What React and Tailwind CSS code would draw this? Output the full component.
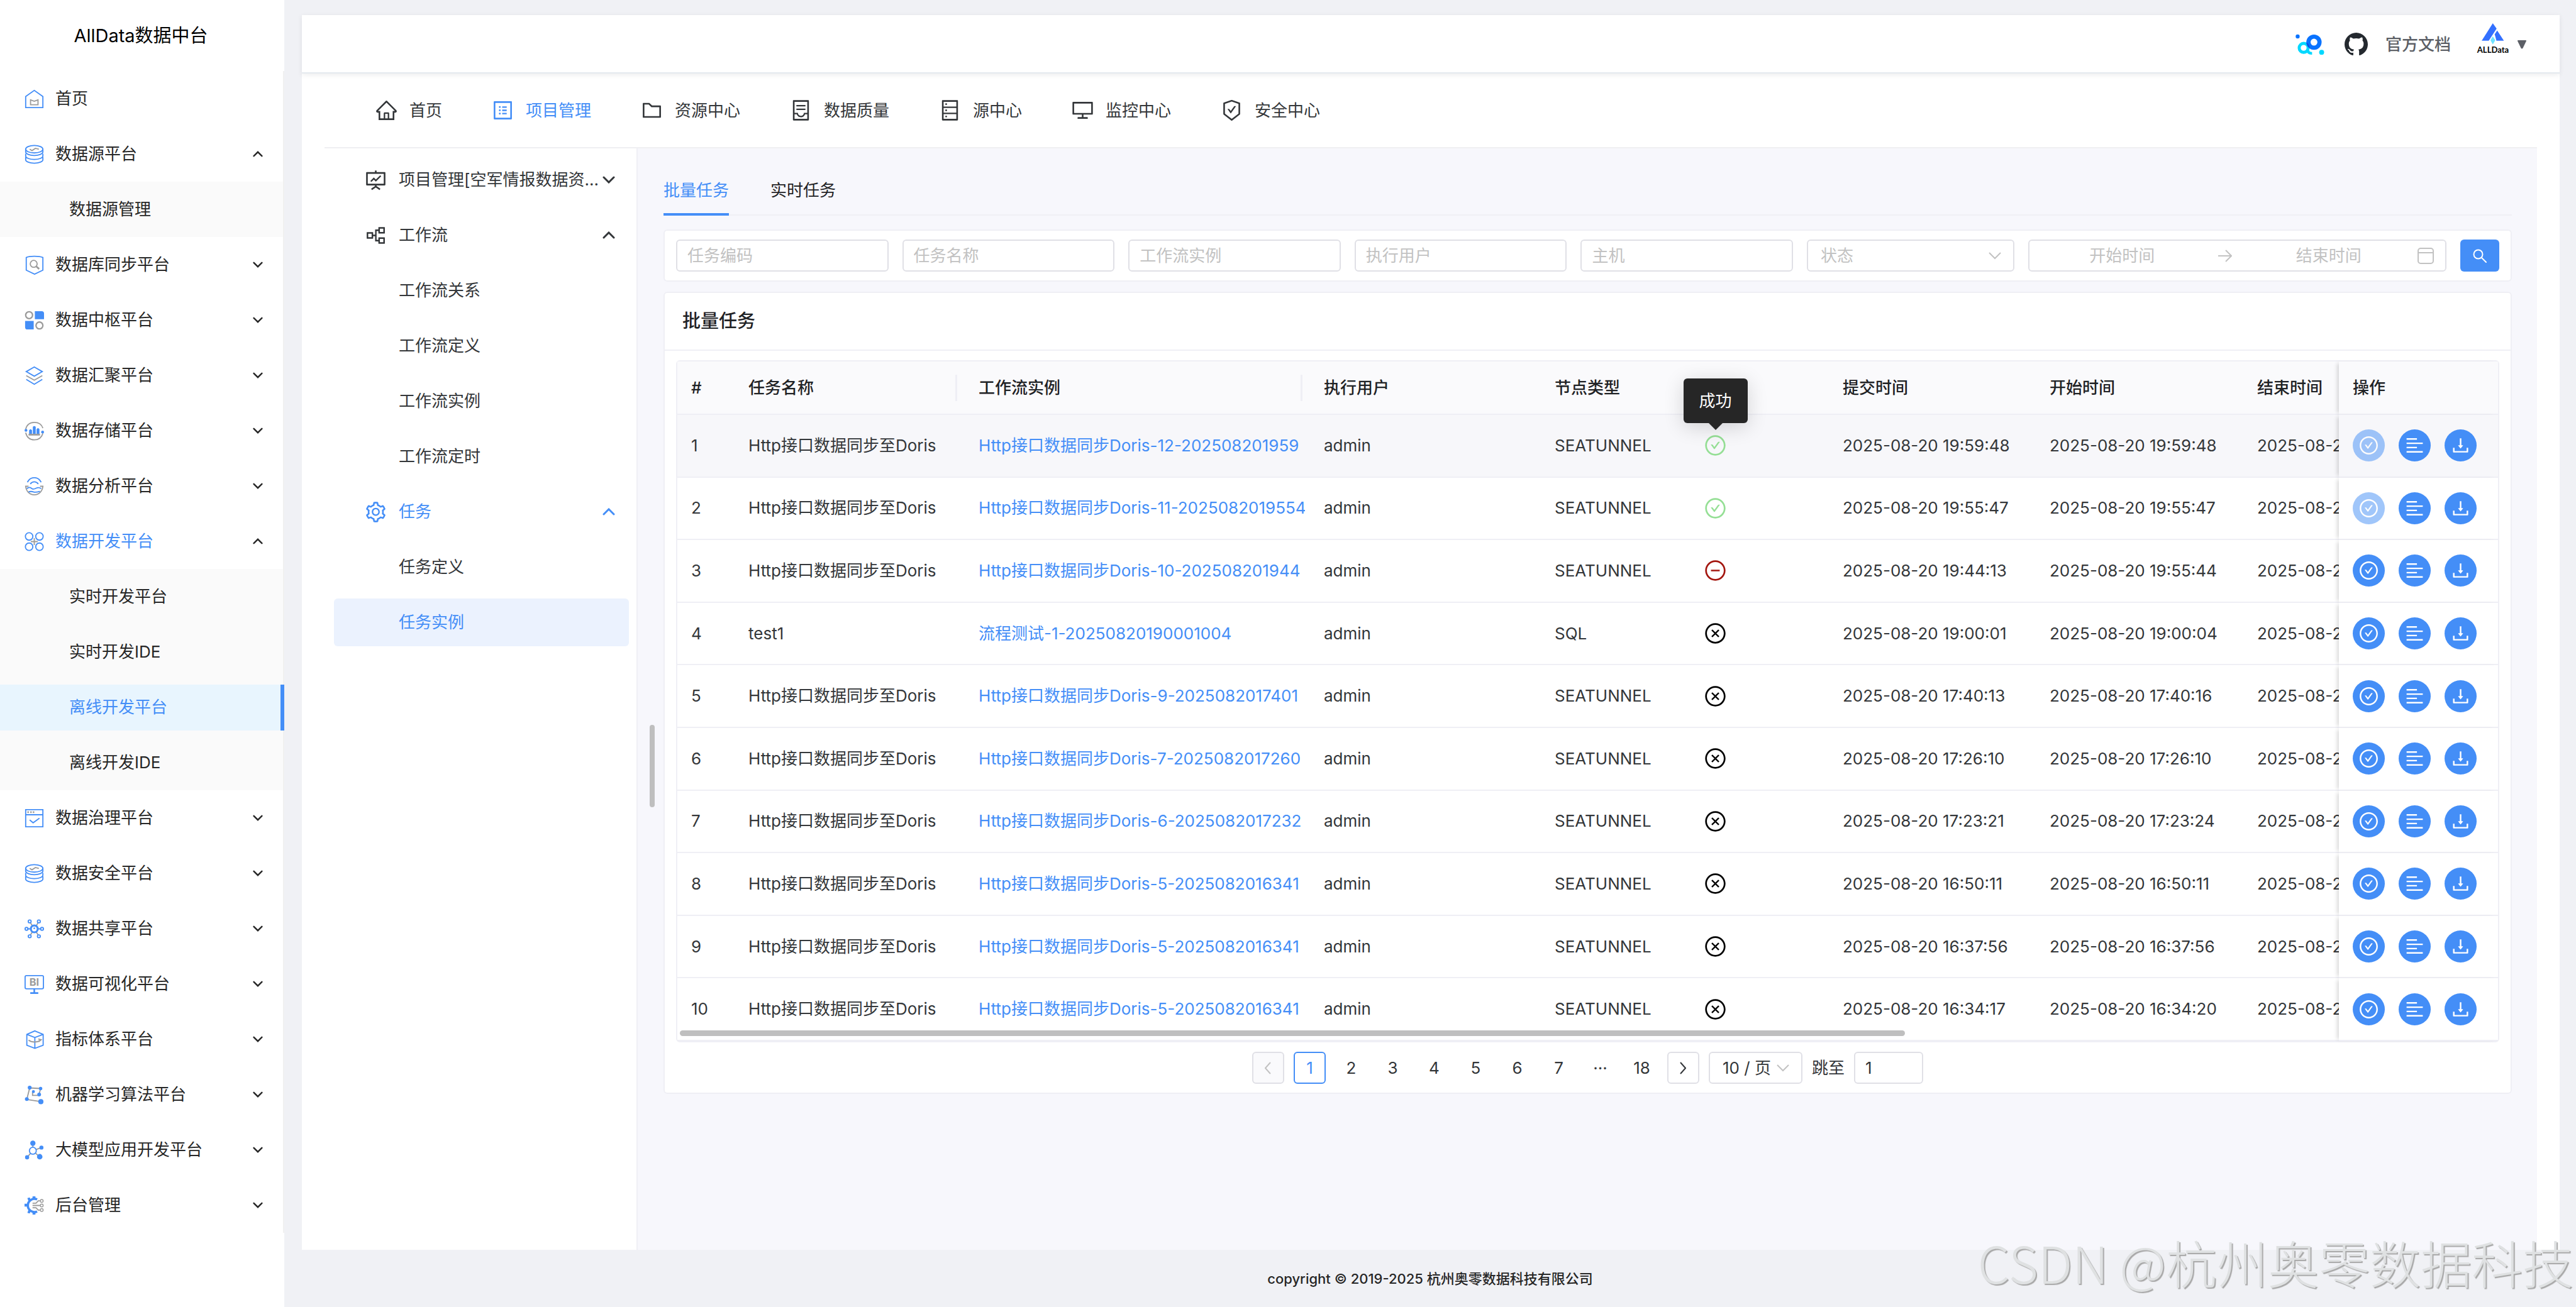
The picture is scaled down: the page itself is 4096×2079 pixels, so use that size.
import { useState } from "react";
import {
  AiOutlineAlignLeft,
  AiOutlineCheckCircle,
  AiOutlineCloseCircle,
  AiOutlineContainer,
  AiOutlineDatabase,
  AiOutlineDesktop,
  AiOutlineDownload,
  AiOutlineFolder,
  AiOutlineFundProjectionScreen,
  AiOutlineHome,
  AiOutlineMinusCircle,
  AiOutlinePartition,
  AiOutlineProfile,
  AiOutlineSafetyCertificate,
  AiOutlineSetting,
} from "react-icons/ai";

const BLUE = "#448ef7";
const GRAY = "#9b9b9b";

// Two-tone icons of the platform menu, all on a 34x34 grid
function MenuIcon({ name }) {
  const shapes = {
    home: (
      <>
        <path d="M2 12.500 17 2l15 10.500V32H2z" stroke={BLUE} />
        <path d="M10.500 18.500 17 21l6.500-2.500V27h-13z" stroke={GRAY} />
      </>
    ),
    db: (
      <>
        <ellipse cx="17" cy="8" rx="15" ry="6.500" stroke={BLUE} />
        <path d="M2 8v5c0 3 6.500 6 15 6s15-3 15-6V8M2 16v4c0 3 6.500 6 15 6s15-3 15-6v-4M2 22v4.500c0 3 6.500 6 15 6s15-3 15-6V22" stroke={BLUE} />
        <path d="m9 8 4 2.500 6-4 6 1.500" stroke={GRAY} />
      </>
    ),
    sync: (
      <>
        <path d="M3 4c5-3 23-3 29 0v22l-14.500 7L3 26z" stroke={BLUE} />
        <circle cx="16" cy="15" r="6" stroke={GRAY} />
        <path d="m20.500 19.500 5 4.500" stroke={GRAY} strokeWidth="3" />
      </>
    ),
    hub: (
      <>
        <circle cx="8" cy="8" r="6" stroke={GRAY} strokeWidth="2.500" />
        <circle cx="26" cy="26" r="6" stroke={GRAY} strokeWidth="2.500" />
        <path d="M18 1h12q4 0 4 4v10H18zM1 18h15v15H5q-4 0-4-4z" fill={BLUE} />
      </>
    ),
    layers: (
      <>
        <path d="m17 2 14 8-14 8-14-8z" stroke={BLUE} />
        <path d="m3 17 14 8 14-8" stroke={GRAY} />
        <path d="m3 23.500 14 8.500 14-8.500" stroke={BLUE} />
      </>
    ),
    store: (
      <>
        <path d="M2 14C4 6 9 2 17 2s13 4 15 10M2 20c2 8 7 12.500 15 12.500S30 28 32 21" stroke={GRAY} />
        <circle cx="2.500" cy="16" r="2.500" fill={BLUE} />
        <circle cx="31.500" cy="19" r="2.500" fill={BLUE} />
        <path d="M8 22v-6q2.500-4 5 0v6zM14.500 22V10q2.500-3 5 0v12zM21 22v-8q2.500-4 5 0v8z" fill={BLUE} />
        <path d="M7 23.500h20" stroke={GRAY} strokeWidth="3" />
      </>
    ),
    analysis: (
      <>
        <path d="M5 10C8 4 12 2 17 2s9 2 12 8M10 13c4-5 10-5 14 0" stroke={BLUE} />
        <path d="M1 17h6M27 17h6M2 17c1 9 7 15 15 15s14-6 15-15" stroke={GRAY} />
        <path d="M4 21c4-3 6-2 9 0s6 0 8-1 5-1 8 1M7 27c4-2 6-1 9 0s7 0 11-1" stroke={BLUE} />
      </>
    ),
    dev: (
      <>
        <circle cx="8" cy="8" r="6.500" stroke={BLUE} />
        <circle cx="26" cy="8" r="6.500" stroke={BLUE} />
        <circle cx="8" cy="26" r="6.500" stroke={BLUE} />
        <circle cx="26" cy="26" r="6.500" stroke={BLUE} />
        <path d="M17 11v12M11 17h12" stroke={GRAY} />
      </>
    ),
    govern: (
      <>
        <path d="M2 2h30v30H2zM2 11h30" stroke={BLUE} />
        <path d="M5 6.500h2.500M10 6.500h2.500M14.500 6.500H17" stroke={GRAY} strokeWidth="3" />
        <path d="m9 20 6 5 11-8" stroke={BLUE} />
      </>
    ),
    share: (
      <>
        <path d="m10 6 4 6M24 6l-4 6M10 28l4-6M24 28l-4-6" stroke={GRAY} />
        <path d="M5 17h6M23 17h6" stroke={BLUE} />
        <circle cx="17" cy="17" r="6" stroke={BLUE} strokeWidth="3.500" />
        <circle cx="17" cy="16" r="1.500" fill={BLUE} />
        <circle cx="9" cy="4" r="2.500" stroke={BLUE} />
        <circle cx="25" cy="4" r="2.500" stroke={BLUE} />
        <circle cx="9" cy="30" r="2.500" stroke={BLUE} />
        <circle cx="25" cy="30" r="2.500" stroke={BLUE} />
        <circle cx="3.500" cy="17" r="2.500" stroke={BLUE} />
        <circle cx="30.500" cy="17" r="2.500" stroke={BLUE} />
      </>
    ),
    bi: (
      <>
        <rect x="1" y="2" width="32" height="23" rx="2.500" stroke={BLUE} />
        <path d="M17 25v7M10 32.500h14" stroke={BLUE} strokeWidth="2.800" />
        <text x="17" y="20" textAnchor="middle" fontSize="18" fontWeight="700" fill={GRAY} stroke="none">BI</text>
      </>
    ),
    cube: (
      <>
        <path d="M18 2 32.500 8v19L18 32.500 4 27V8zM4 8l14 5.500L32.500 8M18 13.500v19" stroke={BLUE} />
        <path d="M7 18c6 4.500 15 4.500 21 0M24 16l5 1.500-4 3" stroke={GRAY} />
      </>
    ),
    ml: (
      <>
        <path d="M4 25 9 5l19 1-3 12H14v-6M4 25l25 4" stroke={GRAY} />
        <circle cx="9" cy="4.500" r="3.400" fill={BLUE} />
        <circle cx="28" cy="6" r="3" fill={BLUE} />
        <circle cx="15.500" cy="11.500" r="2.600" fill={BLUE} />
        <circle cx="25.500" cy="16.500" r="3.300" fill={BLUE} />
        <circle cx="4" cy="24.500" r="3.300" fill={BLUE} />
        <circle cx="28.500" cy="29" r="4.500" fill={BLUE} />
      </>
    ),
    model: (
      <>
        <path d="M14.500 18V5M14.500 18l15-5.500M14.500 18 4.500 29.500M14.500 18l12 11" stroke={GRAY} />
        <circle cx="14.500" cy="18" r="6" stroke={BLUE} fill="#fff" />
        <circle cx="14.500" cy="5" r="4.600" fill={BLUE} />
        <circle cx="29.500" cy="12.500" r="3.500" fill={BLUE} />
        <circle cx="4.500" cy="29.500" r="3.600" fill={BLUE} />
        <circle cx="26.500" cy="28.500" r="4.800" fill={BLUE} />
      </>
    ),
    admin: (
      <>
        <path d="M22 6.500A11.500 11.500 0 1 0 22 27.500" stroke={BLUE} strokeWidth="4" />
        <path d="M14 5V1h5v4zM14 29v4h5v-4zM5 14H0v5h5zM5 4l4-1 2 4-4 3zM5 30l4 1 2-4-4-3z" fill={BLUE} />
        <path d="M14 13h6l4-4h3M14 17h13M14 21h6l4 4h3" stroke={GRAY} />
        <circle cx="30" cy="9" r="2.500" stroke={GRAY} strokeWidth="1.600" />
        <circle cx="30" cy="17" r="2.500" stroke={GRAY} strokeWidth="1.600" />
        <circle cx="30" cy="25" r="2.500" stroke={GRAY} strokeWidth="1.600" />
      </>
    ),
  };
  return (
    <svg viewBox="0 0 34 34" className="w-[31px] h-[31px] shrink-0" fill="none" strokeWidth="2">
      {shapes[name]}
    </svg>
  );
}

function Chevron({ up, className }) {
  return (
    <svg viewBox="0 0 20 12" className={className} fill="none" stroke="currentColor" strokeWidth="3" strokeLinecap="round">
      <path d={up ? "m2 10 8-8 8 8" : "m2 2 8 8 8-8"} />
    </svg>
  );
}

const platforms = [
  { icon: "home", label: "首页" },
  { icon: "db", label: "数据源平台", children: ["数据源管理"] },
  { icon: "sync", label: "数据库同步平台" },
  { icon: "hub", label: "数据中枢平台" },
  { icon: "layers", label: "数据汇聚平台" },
  { icon: "store", label: "数据存储平台" },
  { icon: "analysis", label: "数据分析平台" },
  {
    icon: "dev",
    label: "数据开发平台",
    active: true,
    children: ["实时开发平台", "实时开发IDE", "离线开发平台", "离线开发IDE"],
  },
  { icon: "govern", label: "数据治理平台" },
  { icon: "db", label: "数据安全平台" },
  { icon: "share", label: "数据共享平台" },
  { icon: "bi", label: "数据可视化平台" },
  { icon: "cube", label: "指标体系平台" },
  { icon: "ml", label: "机器学习算法平台" },
  { icon: "model", label: "大模型应用开发平台" },
  { icon: "admin", label: "后台管理" },
];

function Sidebar() {
  const [current, setCurrent] = useState("离线开发平台");

  return (
    <aside className="w-[452px] shrink-0 bg-white text-[#262626]">
      <h1 className="h-[113px] pr-1 flex items-center justify-center text-[29px] text-black">AllData数据中台</h1>
      <nav className="border-r-2 border-[#f0f0f0]">
        {platforms.map((item) => (
          <div key={item.label}>
            <button
              className={`w-full h-[88px] pl-[39px] pr-8 flex items-center ${item.active ? "text-[#448ef7]" : ""}`}
            >
              <MenuIcon name={item.icon} />
              <span className="ml-[18px] flex-1 text-left">{item.label}</span>
              {item.label !== "首页" && <Chevron up={!!item.children} className="w-[16px] h-[10px] text-[#262626]" />}
            </button>
            {item.children && (
              <div className="bg-[#fafafa]">
                {item.children.map((child) => (
                  <div key={child} className="h-[88px] flex items-center">
                    <a
                      href="#"
                      onClick={() => setCurrent(child)}
                      className={`flex-1 h-[73px] pl-[110px] flex items-center ${
                        child === current ? "bg-[#e8f5fe] text-[#448ef7] border-r-[6px] border-[#448ef7] -mr-0.5" : ""
                      }`}
                    >
                      {child}
                    </a>
                  </div>
                ))}
              </div>
            )}
          </div>
        ))}
      </nav>
    </aside>
  );
}

function TopBar() {
  return (
    <header className="h-[93px] pr-[53px] pt-0.5 bg-white border-b-2 border-[#e4e9ee] shadow-[0_2px_8px_rgba(0,21,41,0.08)] flex items-center justify-end relative">
      <svg viewBox="0 0 150 112" className="w-[46px] h-[34px] mr-8" fill="none">
        <circle cx="10.500" cy="13" r="10.500" fill="#0a73ff" />
        <circle cx="42" cy="73" r="23.500" stroke="#00d8ff" strokeWidth="16" />
        <path d="M62 78c0 16 8 24 24 24" stroke="#00d8ff" strokeWidth="14" />
        <circle cx="96" cy="43" r="29" stroke="#0a73ff" strokeWidth="22" />
        <path d="M56 44q16 8 18 31-16-8-18-31z" fill="#0a50e8" />
        <circle cx="136" cy="96" r="13" fill="#00d8ff" />
      </svg>
      <svg viewBox="0 0 16 16" className="w-[37px] h-[37px] mr-7" fill="#24292f">
        <path d="M8 0C3.580 0 0 3.580 0 8c0 3.540 2.290 6.530 5.470 7.590.4.070.55-.17.55-.38 0-.19-.01-.82-.01-1.490-2.010.37-2.530-.49-2.690-.94-.09-.23-.48-.94-.82-1.130-.28-.15-.68-.52-.01-.53.63-.01 1.080.58 1.230.82.72 1.210 1.870.87 2.330.66.07-.52.28-.87.51-1.070-1.780-.2-3.640-.89-3.640-3.950 0-.87.31-1.590.82-2.150-.08-.2-.36-1.020.08-2.120 0 0 .67-.21 2.200.82.64-.18 1.320-.27 2-.27.68 0 1.360.09 2 .27 1.530-1.040 2.200-.82 2.200-.82.44 1.100.16 1.920.08 2.120.51.56.82 1.270.82 2.150 0 3.070-1.870 3.750-3.650 3.950.29.25.54.73.54 1.480 0 1.070-.01 1.930-.01 2.200 0 .21.15.46.55.38A8.013 8.013 0 0016 8c0-4.420-3.580-8-8-8z" />
      </svg>
      <a href="#" className="mr-10 font-medium text-[#5c5f66]">官方文档</a>
      <button className="flex items-center gap-3">
        <svg viewBox="0 0 176 158" className="w-[54px] h-[48px] mb-[20px] overflow-visible">
          <path d="m87 0 20 28-41 63H29z" fill="#3370ff" />
          <path d="m110 38 35 53h-39l-9-33z" fill="#3370ff" />
          <path d="m87 68 13 21-13 22-12-22z" fill="#6ee3ff" />
          <text x="88" y="154" textAnchor="middle" fontSize="43" fontWeight="700" fontFamily="Lato" fill="#000">ALLData</text>
        </svg>
        <svg viewBox="0 0 14 14" className="w-[14px] h-[14px]" fill="#5c5f66">
          <path d="M1 0h12q1.500 0 .8 1.500L8.500 12.500q-1.500 2-3 0L.2 1.500Q-.5 0 1 0z" />
        </svg>
      </button>
    </header>
  );
}

const sections = [
  { icon: AiOutlineHome, label: "首页" },
  { icon: AiOutlineProfile, label: "项目管理" },
  { icon: AiOutlineFolder, label: "资源中心" },
  { icon: AiOutlineContainer, label: "数据质量" },
  { icon: AiOutlineDatabase, label: "源中心" },
  { icon: AiOutlineDesktop, label: "监控中心" },
  { icon: AiOutlineSafetyCertificate, label: "安全中心" },
];

function SectionNav() {
  return (
    <nav className="h-[119px] pl-[80px] flex items-center gap-[78px] border-b-2 border-[#efeff2] text-[#333639]">
      {sections.map(({ icon: Icon, label }) => (
        <a
          key={label}
          href="#"
          className={`flex items-center gap-[18px] whitespace-nowrap ${label === "项目管理" ? "text-[#448ef7]" : ""}`}
        >
          <Icon className="w-[37px] h-[37px]" />
          {label}
        </a>
      ))}
    </nav>
  );
}

const projectMenu = [
  { icon: AiOutlineFundProjectionScreen, label: "项目管理[空军情报数据资...", open: false },
  { icon: AiOutlinePartition, label: "工作流", open: true },
  { label: "工作流关系" },
  { label: "工作流定义" },
  { label: "工作流实例" },
  { label: "工作流定时" },
  { icon: AiOutlineSetting, label: "任务", open: true, active: true },
  { label: "任务定义" },
  { label: "任务实例", active: true },
];

function ProjectMenu() {
  return (
    <nav className="w-[498px] shrink-0 pl-[15px] pr-[12px] border-r-2 border-[#efeff5] text-[#333639]">
      {projectMenu.map(({ icon: Icon, label, open, active }) => (
        <button
          key={label}
          className={`w-full h-[76px] mt-3 pl-[48px] pr-[22px] flex items-center rounded-md whitespace-nowrap ${
            active ? "text-[#448ef7]" : ""
          } ${active && !Icon ? "bg-[#ebf2fe]" : ""}`}
        >
          {Icon ? <Icon className="w-[37px] h-[37px] mr-[18px]" /> : <span className="w-[55px]" />}
          <span className="flex-1 text-left">{label}</span>
          {Icon && <Chevron up={open} className="w-[20px] h-[12px]" />}
        </button>
      ))}
    </nav>
  );
}

function FilterBar() {
  const box = "h-[51px] min-w-0 bg-white border-2 border-[#e0e0e6] rounded-md placeholder:text-[#c2c2c2] outline-none";
  return (
    <form className="mt-[22px] px-[18px] py-[14px] flex gap-[22px] bg-white border-2 border-[#efeff5] rounded-md">
      {["任务编码", "任务名称", "工作流实例", "执行用户", "主机"].map((label) => (
        <input key={label} aria-label={label} placeholder={label} className={`${box} flex-1 px-4`} />
      ))}
      <div className="relative w-[330px]">
        <select aria-label="状态" className={`${box} w-full px-[20px] appearance-none text-[#c2c2c2]`}>
          <option>状态</option>
        </select>
        <svg viewBox="0 0 20 12" className="absolute right-[21px] top-[20px] w-[20px] h-[12px]" fill="none" stroke="#c2c2c2" strokeWidth="2">
          <path d="m1 1 9 9 9-9" />
        </svg>
      </div>
      <div className={`${box} w-[665px] px-[18px] flex items-center`}>
        <input aria-label="开始时间" placeholder="开始时间" className="flex-1 min-w-0 text-center outline-none placeholder:text-[#c2c2c2]" />
        <svg viewBox="0 0 22 22" className="w-[22px] h-[22px] mx-6" fill="none" stroke="#c2c2c2" strokeWidth="2">
          <path d="M0 11h20M12 2l9 9-9 9" />
        </svg>
        <input aria-label="结束时间" placeholder="结束时间" className="flex-1 min-w-0 text-center outline-none placeholder:text-[#c2c2c2]" />
        <svg viewBox="0 0 26 26" className="w-[26px] h-[26px] ml-3" fill="none" stroke="#c2c2c2" strokeWidth="2">
          <rect x="1" y="1" width="24" height="24" rx="4" />
          <path d="M1 8h24" />
        </svg>
      </div>
      <button type="button" aria-label="搜索" className="w-[62px] h-[51px] rounded-md bg-[#448ef7] flex items-center justify-center">
        <svg viewBox="0 0 22 22" className="w-[22px] h-[22px]" fill="none" stroke="#fff" strokeWidth="2" strokeLinecap="round">
          <circle cx="8.500" cy="8.500" r="7" />
          <path d="m14 14 7 7" />
        </svg>
      </button>
    </form>
  );
}

const HTTP_TASK = "Http接口数据同步至Doris";

const tasks = [
  { name: HTTP_TASK, instance: "Http接口数据同步Doris-12-202508201959", type: "SEATUNNEL", status: "success", submit: "2025-08-20 19:59:48", start: "2025-08-20 19:59:48" },
  { name: HTTP_TASK, instance: "Http接口数据同步Doris-11-2025082019554", type: "SEATUNNEL", status: "success", submit: "2025-08-20 19:55:47", start: "2025-08-20 19:55:47" },
  { name: HTTP_TASK, instance: "Http接口数据同步Doris-10-202508201944", type: "SEATUNNEL", status: "stop", submit: "2025-08-20 19:44:13", start: "2025-08-20 19:55:44" },
  { name: "test1", instance: "流程测试-1-20250820190001004", type: "SQL", status: "fail", submit: "2025-08-20 19:00:01", start: "2025-08-20 19:00:04" },
  { name: HTTP_TASK, instance: "Http接口数据同步Doris-9-2025082017401", type: "SEATUNNEL", status: "fail", submit: "2025-08-20 17:40:13", start: "2025-08-20 17:40:16" },
  { name: HTTP_TASK, instance: "Http接口数据同步Doris-7-2025082017260", type: "SEATUNNEL", status: "fail", submit: "2025-08-20 17:26:10", start: "2025-08-20 17:26:10" },
  { name: HTTP_TASK, instance: "Http接口数据同步Doris-6-2025082017232", type: "SEATUNNEL", status: "fail", submit: "2025-08-20 17:23:21", start: "2025-08-20 17:23:24" },
  { name: HTTP_TASK, instance: "Http接口数据同步Doris-5-2025082016341", type: "SEATUNNEL", status: "fail", submit: "2025-08-20 16:50:11", start: "2025-08-20 16:50:11" },
  { name: HTTP_TASK, instance: "Http接口数据同步Doris-5-2025082016341", type: "SEATUNNEL", status: "fail", submit: "2025-08-20 16:37:56", start: "2025-08-20 16:37:56" },
  { name: HTTP_TASK, instance: "Http接口数据同步Doris-5-2025082016341", type: "SEATUNNEL", status: "fail", submit: "2025-08-20 16:34:17", start: "2025-08-20 16:34:20" },
];

function StatusIcon({ status }) {
  if (status === "success") return <AiOutlineCheckCircle className="w-[37px] h-[37px] text-[#95df95]" />;
  if (status === "stop") return <AiOutlineMinusCircle className="w-[37px] h-[37px] text-[#a3160f]" />;
  return <AiOutlineCloseCircle className="w-[37px] h-[37px] text-black" />;
}

function Tooltip({ children }) {
  return (
    <div
      role="tooltip"
      className="absolute z-10 bottom-full left-1/2 -translate-x-1/2 mb-[17px] px-[25px] py-[17px] rounded-md bg-[#262626] text-white leading-[37px] whitespace-nowrap shadow-[0_6px_32px_rgba(0,0,0,0.16)]"
    >
      {children}
      <svg viewBox="0 0 22 11" className="absolute top-full left-1/2 -translate-x-1/2 w-[22px] h-[11px]" fill="#262626">
        <path d="M0 0h22L11 11z" />
      </svg>
    </div>
  );
}

function TaskTable() {
  const th = "px-[22px] text-left font-medium border-b-2 border-[#efeff5] bg-[#fafafc]";
  const td = "px-[22px] border-b-2 border-[#efeff5] whitespace-nowrap";
  const sticky = "relative shadow-[-6px_0_6px_-3px_rgba(0,0,0,0.14)]";
  const action = "w-[51px] h-[51px] rounded-full bg-[#448ef7] text-white flex items-center justify-center disabled:opacity-50";

  return (
    <div className="relative border-2 border-[#efeff5] rounded-md">
      <table className="w-full h-[1081px] table-fixed border-separate border-spacing-0">
        <colgroup>
          <col className="w-[91px]" />
          <col className="w-[366px]" />
          <col className="w-[549px]" />
          <col className="w-[367px]" />
          <col className="w-[237px]" />
          <col className="w-[221px]" />
          <col className="w-[329px]" />
          <col className="w-[330px]" />
          <col />
          <col className="w-[253px]" />
        </colgroup>
        <thead className="text-[#1f2225]">
          <tr className="h-[85px]">
            <th className={th}>#</th>
            {["任务名称", "工作流实例"].map((label) => (
              <th key={label} className={`${th} pr-3`}>
                <div className="flex items-center justify-between">
                  {label}
                  <span className="w-[3px] h-[42px] bg-[#efeff5]" />
                </div>
              </th>
            ))}
            <th className={th}>执行用户</th>
            <th className={th}>节点类型</th>
            <th className={th} aria-label="状态" />
            <th className={th}>提交时间</th>
            <th className={th}>开始时间</th>
            <th className={`${th} whitespace-nowrap`}>结束时间</th>
            <th className={`${th} ${sticky}`}>操作</th>
          </tr>
        </thead>
        <tbody>
          {tasks.map((task, i) => (
            <tr key={i} className={i === 0 ? "bg-[#f7f7fa]" : "bg-white"}>
              <td className={td}>{i + 1}</td>
              <td className={td}>{task.name}</td>
              <td className={`${td} pr-2`}>
                <a href="#" className="block overflow-hidden text-[#448ef7]">{task.instance}</a>
              </td>
              <td className={td}>admin</td>
              <td className={td}>{task.type}</td>
              <td className={td}>
                <div className="relative w-[37px]">
                  <StatusIcon status={task.status} />
                  {i === 0 && <Tooltip>成功</Tooltip>}
                </div>
              </td>
              <td className={td}>{task.submit}</td>
              <td className={td}>{task.start}</td>
              <td className={`${td} pr-0 overflow-hidden`}>{task.start}</td>
              <td className={`${td} ${sticky} ${i === 0 ? "bg-[#f7f7fa]" : "bg-white"}`}>
                <div className="flex gap-[22px]">
                  <button aria-label="强制成功" className={action} disabled={task.status === "success"}>
                    <AiOutlineCheckCircle className="w-[33px] h-[33px]" />
                  </button>
                  <button aria-label="查看日志" className={action}>
                    <AiOutlineAlignLeft className="w-[33px] h-[33px]" />
                  </button>
                  <button aria-label="下载日志" className={action}>
                    <AiOutlineDownload className="w-[33px] h-[33px]" />
                  </button>
                </div>
              </td>
            </tr>
          ))}
        </tbody>
      </table>
      {/* horizontal scroll thumb */}
      <div className="absolute left-1 bottom-2 w-[1948px] h-[9px] rounded-full bg-[#bfbfbf]" />
    </div>
  );
}

function Pagination() {
  const [page, setPage] = useState(1);
  const cell = "w-[51px] h-[51px] rounded-md flex items-center justify-center";
  const outlined = "border-2 border-[#e0e0e6] rounded-md";

  return (
    <div className="mt-[15px] flex items-center justify-center gap-[15px]">
      <button aria-label="上一页" className={`${cell} ${outlined} bg-[#fafafc]`}>
        <svg viewBox="0 0 10 20" className="w-[10px] h-[20px]" fill="none" stroke="#c2c2c2" strokeWidth="2">
          <path d="m9 1-8 9 8 9" />
        </svg>
      </button>
      {[1, 2, 3, 4, 5, 6, 7, "···", 18].map((n) => (
        <button
          key={n}
          onClick={() => setPage(n)}
          className={`${cell} ${n === page ? "border-2 border-[#448ef7] text-[#448ef7]" : ""}`}
        >
          {n}
        </button>
      ))}
      <button aria-label="下一页" className={`${cell} ${outlined}`}>
        <svg viewBox="0 0 10 20" className="w-[10px] h-[20px]" fill="none" stroke="currentColor" strokeWidth="2">
          <path d="m1 1 8 9-8 9" />
        </svg>
      </button>
      <div className="relative w-[149px]">
        <select aria-label="每页条数" className={`${outlined} w-full h-[51px] pl-[20px] appearance-none bg-white`}>
          <option>10 / 页</option>
        </select>
        <svg viewBox="0 0 20 12" className="absolute right-[21px] top-[20px] w-[20px] h-[12px]" fill="none" stroke="#c2c2c2" strokeWidth="2">
          <path d="m1 1 9 9 9-9" />
        </svg>
      </div>
      <label htmlFor="jump">跳至</label>
      <input id="jump" defaultValue="1" className={`${outlined} w-[110px] h-[51px] px-4 bg-white`} />
    </div>
  );
}

function TaskInstances() {
  return (
    <main className="flex-1 min-w-0 pr-10 bg-[#f7f7fc] flex text-[#333639]">
      {/* collapse handle between menu and content */}
      <div className="w-[41px] shrink-0 pt-[917px] flex justify-center">
        <button aria-label="收起菜单" className="w-[8px] h-[131px] ml-1 rounded-full bg-[#bfbfbf]" />
      </div>
      <div className="flex-1 min-w-0">
        <div className="mt-[27px] h-[80px] flex gap-[66px] border-b-2 border-[#efeff5]">
          <button className="h-[80px] border-y-4 border-t-transparent border-b-[#448ef7] text-[#448ef7]">批量任务</button>
          <button className="h-[80px] text-[#1f2225]">实时任务</button>
        </div>
        <FilterBar />
        <section className="mt-4 bg-white border-2 border-[#efeff5] rounded-md">
          <h2 className="h-[92px] px-[28px] flex items-center border-b-2 border-[#efeff5] text-[29px] font-medium text-[#1f2225]">
            批量任务
          </h2>
          <div className="px-[18px] pt-[15px] pb-[14px]">
            <TaskTable />
            <Pagination />
          </div>
        </section>
      </div>
    </main>
  );
}

export default function App() {
  return (
    <div className="relative min-h-screen flex overflow-hidden bg-[#f0f1f5] text-[26px] leading-[36px] font-['Inter','Noto_Sans_CJK_SC',sans-serif]">
      <Sidebar />
      <div className="flex-1 min-w-0 flex flex-col">
        <div className="flex-1 pt-6 pl-7 pr-[26px] flex flex-col">
          <TopBar />
          <div className="flex-1 px-9 bg-white flex flex-col">
            <SectionNav />
            <div className="flex-1 flex">
              <ProjectMenu />
              <TaskInstances />
            </div>
          </div>
        </div>
        <footer className="h-[91px] flex items-center justify-center text-[22px] font-medium text-[#262626]">
          copyright © 2019-2025 杭州奥零数据科技有限公司
        </footer>
      </div>
      <div className="absolute right-1 bottom-3 pointer-events-none whitespace-nowrap text-[81px] leading-[120px] text-[#dfe1e2] [text-shadow:2px_2px_1px_#a8a8a8] font-['Noto_Sans_CJK_SC',sans-serif] font-light">
        CSDN @杭州奥零数据科技
      </div>
    </div>
  );
}
